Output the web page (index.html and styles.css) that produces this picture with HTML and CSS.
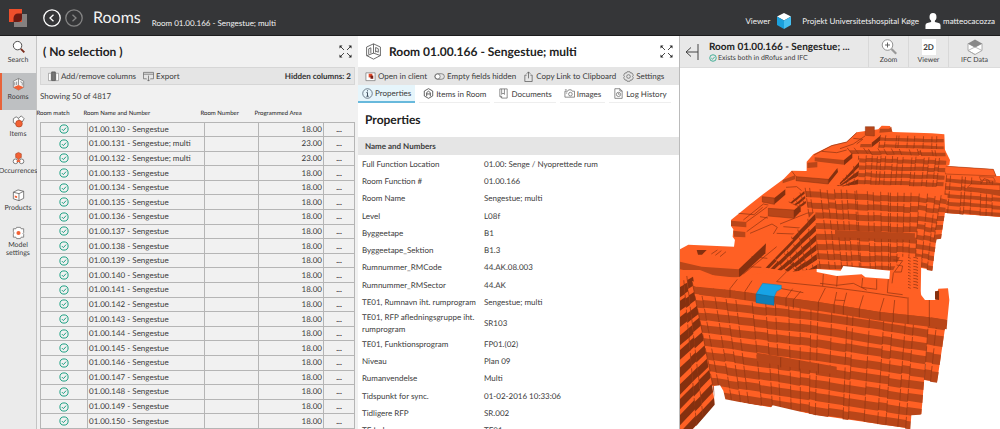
FILE: index.html
```html
<!DOCTYPE html>
<html lang="en">
<head>
    <meta charset="UTF-8">
    <meta name="viewport" content="width=device-width, initial-scale=1.0">
    <title>Rooms</title>
    <link rel="stylesheet" href="styles.css">
</head>
<body>
    <svg class="symbols" aria-hidden="true">
        <symbol id="check" viewBox="0 0 10 10">
            <circle cx="5" cy="5" r="4.1" fill="none" stroke="#1fa184" stroke-width="1"/>
            <path d="M2.9 5.1l1.5 1.5 2.7-3" fill="none" stroke="#1fa184" stroke-width="1"/>
        </symbol>
        <symbol id="expand" viewBox="0 0 13 13">
            <path d="M1 1l4 4M12 1L8 5M1 12l4-4M12 12L8 8" stroke="#333" stroke-width=".9"/>
            <path d="M.5.500h3L.5 3.500zM12.500.500v3l-3-3zM.5 12.500v-3l3 3zM12.500 12.500h-3l3-3z" fill="#222"/>
        </symbol>
    </svg>

    <header class="top-bar">
        <svg class="logo" viewBox="0 0 18 18">
            <rect x="5" y="5" width="13" height="13" fill="#858180"/>
            <path d="M0 0h13v13H0z" fill="#ee4f2b"/>
            <path d="M13 4.500v4.500q0 4-4.500 4H4.500V9q.5-4.500 4.500-4.500z" fill="#6b1a12"/>
        </svg>
        <div class="history">
            <button type="button" aria-label="Back">
                <svg viewBox="0 0 18 18"><circle cx="9" cy="9" r="8.200"/><path d="M10.500 5.800L7 9l3.500 3.200"/></svg>
            </button>
            <button type="button" class="disabled" aria-label="Forward">
                <svg viewBox="0 0 18 18"><circle cx="9" cy="9" r="8.200"/><path d="M7.500 5.800L11 9l-3.500 3.200"/></svg>
            </button>
        </div>
        <div class="title">
            <h1>Rooms</h1>
            <span>Room 01.00.166 - Sengestue; multi</span>
        </div>
        <div class="account">
            <a href="#">Viewer
                <svg class="cube" viewBox="0 0 14 16">
                    <path d="M7 0l7 3.500L7 7.500 0 3.500z" fill="#fff"/>
                    <path d="M0 3.500l7 4V16l-7-4z" fill="#1aa0dc"/>
                    <path d="M14 3.500l-7 4V16l7-4z" fill="#45bff0"/>
                </svg>
            </a>
            <span class="project">Projekt Universitetshospital Køge</span>
            <a href="#">
                <svg class="user" viewBox="0 0 16 17">
                    <ellipse cx="8" cy="4.200" rx="3.700" ry="4.200"/>
                    <path d="M6 7h4v2.500l4 1q2 .6 2 2.500v4H0v-4q0-1.900 2-2.500l4-1z"/>
                </svg>matteocacozza
            </a>
        </div>
    </header>

    <main class="workspace">
        <nav class="sidebar">
            <a href="#">
                <svg viewBox="0 0 16 16">
                    <circle cx="7" cy="6" r="4.500" fill="#fff" stroke="#444"/>
                    <path d="M10.500 9.500l3.700 3.700" stroke="#7a2b1a" stroke-width="2"/>
                </svg>
                Search
            </a>
            <a href="#" class="active">
                <svg viewBox="0 0 16 16">
                    <path d="M8 1.500l5.500 3v6.500L8 14 2.500 11V4.500z" fill="#f4f4f4" stroke="#777" stroke-width=".8"/>
                    <path d="M8 8.500l5.500 2.500L8 14l-5.500-3z" fill="#f26134"/>
                    <path d="M8 1.500v7M4 5.500v3.500M6 5v3.500M10 5l2 1v3" fill="none" stroke="#777" stroke-width=".8"/>
                </svg>
                Rooms
            </a>
            <a href="#">
                <svg viewBox="0 0 16 16">
                    <path d="M2.500 5l3-2 3 2v4l-3 2-3-2z" fill="#fff" stroke="#555" stroke-width=".8"/>
                    <path d="M8 4.500L11 2l3 3-2 3.500" fill="#fff" stroke="#555" stroke-width=".8"/>
                    <circle cx="8.500" cy="10.300" r="3.600" fill="#f26134" stroke="#a33a1a" stroke-width=".6"/>
                </svg>
                Items
            </a>
            <a href="#">
                <svg viewBox="0 0 16 16">
                    <path d="M5 3l3-1.500L11 3v4L8 8.500 5 7z" fill="#f26134" stroke="#a33a1a" stroke-width=".6"/>
                    <circle cx="4.800" cy="11" r="2.500" fill="#fff" stroke="#555" stroke-width=".8"/>
                    <circle cx="11.200" cy="11" r="2.500" fill="#fff" stroke="#555" stroke-width=".8"/>
                    <path d="M8 8v3M6 11h4" stroke="#f26134" stroke-width="1.500"/>
                </svg>
                Occurrences
            </a>
            <a href="#">
                <svg viewBox="0 0 16 16">
                    <path d="M2.500 4.500l5-2.500 6 1.500v7.500l-5 2.500-6-2z" fill="#fff" stroke="#555" stroke-width=".8"/>
                    <path d="M2.500 4.500l6 1.500 5-2.500M8.500 6v7.500" fill="none" stroke="#555" stroke-width=".8"/>
                    <path d="M4 8l2.500.7v2L4 10z" fill="#f26134"/>
                </svg>
                Products
            </a>
            <a href="#">
                <svg viewBox="0 0 16 16">
                    <path d="M6 2.500h4l.8 1.500h2.700V8l-.7 1 .7 1v3h-2.700L10 14.500H6L5.200 13H2.500v-3l.7-1.500-.7-1.500V4h2.700z" fill="#fff" stroke="#666" stroke-width=".8"/>
                    <circle cx="8" cy="8.500" r="2.200" fill="#f26134"/>
                </svg>
                Model settings
            </a>
        </nav>

        <section class="room-list">
            <div class="panel-head">
                <h2>( No selection )</h2>
                <button type="button" aria-label="Expand"><svg class="expand"><use href="#expand"/></svg></button>
            </div>
            <div class="toolbar">
                <button type="button">
                    <svg viewBox="0 0 12 12"><path d="M.5 2.500h3v8h-3zM8.500 2.500h3v8h-3z" fill="#fff" stroke="#888" stroke-width=".7"/><path d="M4 1h4v9.500H4z" fill="#777" stroke="#444" stroke-width=".7"/></svg>
                    Add/remove columns
                </button>
                <button type="button">
                    <svg viewBox="0 0 12 12"><path d="M4 8.500H.5v-7h11v7H8M.5 3.500h11M6 5v6M4.500 9.500L6 11l1.500-1.500" fill="none" stroke="#666" stroke-width=".8"/></svg>
                    Export
                </button>
                <strong>Hidden columns: 2</strong>
            </div>
            <p class="count">Showing 50 of 4817</p>
            <div class="table-wrap">
                <table>
                    <thead>
                        <tr>
                            <th class="match">Room match</th>
                            <th class="name">Room Name and Number</th>
                            <th class="number">Room Number</th>
                            <th class="area">Programmed Area</th>
                            <th class="more"></th>
                        </tr>
                    </thead>
                    <tbody id="roomRows"></tbody>
                </table>
            </div>
        </section>

        <section class="details">
            <div class="panel-head">
                <svg class="room-icon" viewBox="0 0 16 16">
                    <path d="M8 .8l6.500 3v8L8 15.200l-6.500-3.400v-8zM8 .8v9M1.500 12L8 9.500l6.500 2.300" fill="none" stroke="#555" stroke-width=".8"/>
                    <path d="M3.500 10.500V5.500l2-1v5.200M10 8.800V4.200l2.500 1.200v3.300L10 7.500" fill="none" stroke="#555" stroke-width=".8"/>
                </svg>
                <h2>Room 01.00.166 - Sengestue; multi</h2>
                <button type="button" aria-label="Expand"><svg class="expand"><use href="#expand"/></svg></button>
            </div>
            <div class="toolbar">
                <button type="button">
                    <svg viewBox="0 0 12 12"><path d="M1 2h10v8.500H1z" fill="#fff" stroke="#777" stroke-width=".8"/><path d="M4 3h4v4H4z" fill="#e0492a"/><path d="M6 5h3v3.500H6z" fill="#7a2016"/></svg>
                    Open in client
                </button>
                <button type="button">
                    <svg viewBox="0 0 12 12"><rect x=".8" y="3" width="10.500" height="6" rx="3" fill="none" stroke="#666" stroke-width=".8"/><circle cx="4" cy="6" r="2.700" fill="#fff" stroke="#666" stroke-width=".8"/></svg>
                    Empty fields hidden
                </button>
                <button type="button">
                    <svg viewBox="0 0 12 12"><path d="M4 4.500H2v7h8v-7H8M6 8V1M4 3l2-2 2 2" fill="none" stroke="#555" stroke-width=".8"/></svg>
                    Copy Link to Clipboard
                </button>
                <button type="button">
                    <svg viewBox="0 0 12 12"><path d="M4.500.8h3l.7 1.400 1.600-.1 1.500 2.500L10.400 6l.9 1.400-1.500 2.500-1.600-.1-.7 1.400h-3l-.7-1.400-1.600.1L.7 7.400 1.600 6 .7 4.600l1.500-2.500 1.600.1z" fill="none" stroke="#666" stroke-width=".8"/><circle cx="6" cy="6" r="2" fill="none" stroke="#666" stroke-width=".8"/></svg>
                    Settings
                </button>
            </div>
            <nav class="tabs">
                <a href="#" class="active">
                    <svg viewBox="0 0 12 12"><circle cx="6" cy="6" r="5.200" fill="none" stroke="#456" stroke-width=".8"/><path d="M6 5v4M4.800 5H6M4.800 9h2.500M6 2.500v1.200" fill="none" stroke="#345" stroke-width="1"/></svg>
                    Properties
                </a>
                <a href="#">
                    <svg viewBox="0 0 12 12"><path d="M6 .7l4.600 2.600v5.400L6 11.300 1.400 8.700V3.300z" fill="none" stroke="#444" stroke-width=".9"/><path d="M4 9V5l2-1.500L8 5v4M4 6.500h4" fill="none" stroke="#444" stroke-width=".9"/></svg>
                    Items in Room
                </a>
                <a href="#">
                    <svg viewBox="0 0 12 12"><path d="M2 1h8v10H4L2 9zM4 1v6l1.500-1.500L7 7V1M4 11V9H2" fill="none" stroke="#666" stroke-width=".8"/></svg>
                    Documents
                </a>
                <a href="#">
                    <svg viewBox="0 0 12 12"><path d="M1 3.500h3l1-1.500h3l1 1.500h2.500V10H1z" fill="none" stroke="#666" stroke-width=".8"/><circle cx="7" cy="6.700" r="2" fill="none" stroke="#666" stroke-width=".8"/><path d="M1 2h2M2 5.500h1.500" stroke="#666" stroke-width=".8"/></svg>
                    Images
                </a>
                <a href="#">
                    <svg viewBox="0 0 12 12"><path d="M2 .8h5.500L10 3.300v8H2zM7.500.8v2.500H10" fill="none" stroke="#666" stroke-width=".8"/><circle cx="6" cy="7" r="2.300" fill="none" stroke="#666" stroke-width=".8"/><path d="M6 5.500V7h1.200" fill="none" stroke="#666" stroke-width=".7"/></svg>
                    Log History
                </a>
            </nav>
            <h3>Properties</h3>
            <h4>Name and Numbers</h4>
            <div class="table-wrap">
                <table>
                    <tbody id="propertyRows"></tbody>
                </table>
            </div>
        </section>

        <section class="viewer">
            <div class="viewer-head">
                <button type="button" class="collapse" aria-label="Collapse">
                    <svg viewBox="0 0 14 16"><path d="M13 0v16M13 8H1M6 3.500L1 8l5 4.500" fill="none" stroke="#444" stroke-width="1"/></svg>
                </button>
                <div class="viewer-title">
                    <h2>Room 01.00.166 - Sengestue; ...</h2>
                    <p><svg class="check"><use href="#check"/></svg>Exists both in dRofus and IFC</p>
                </div>
                <button type="button" class="tool">
                    <svg viewBox="0 0 16 16"><circle cx="6.500" cy="6" r="5.300" fill="#fff" stroke="#888" stroke-width=".9"/><path d="M6.500 3.500v5M4 6h5" stroke="#555" stroke-width=".9"/><path d="M10.500 10l4.700 4.700" stroke="#999" stroke-width="2.200"/></svg>
                    Zoom
                </button>
                <button type="button" class="tool">
                    <b>2D</b>
                    Viewer
                </button>
                <button type="button" class="tool wide">
                    <svg viewBox="0 0 16 16"><path d="M1 4.500v7L8 15.500l7-4v-7L8 8z" fill="#fff" stroke="#999" stroke-width=".8"/><path d="M8 .5l7 4-7 4-7-4z" fill="#888"/><path d="M8 15.500l-7-4 7-3.500 7 3.500" fill="none" stroke="#aaa" stroke-width=".8"/></svg>
                    IFC Data
                </button>
            </div>
            <svg class="model" id="model" viewBox="0 -6 960 1083" preserveAspectRatio="xMinYMin slice"></svg>
        </section>
    </main>
    <script src="script.js"></script>
</body>
</html>
```
FILE: styles.css
```css
* {
    box-sizing: border-box;
}
body {
    font-family: Lato, sans-serif;
    font-size: 8px;
    text-rendering: geometricPrecision;
    margin: 0;
    height: 100vh;
    display: flex;
    flex-direction: column;
    overflow: hidden;
    color: #3c3c3c;
    background-color: #fff;
}
h1, h2, h3, h4, p {
    margin: 0;
}
a {
    color: inherit;
    text-decoration: none;
}
button {
    font: inherit;
    color: inherit;
    padding: 0;
    border: none;
    background: none;
    cursor: pointer;
    text-rendering: inherit;
}
svg {
    flex: none;
    display: block;
}
.symbols {
    display: none;
}

/* top bar */
.top-bar {
    flex: none;
    height: 36px;
    display: flex;
    align-items: center;
    padding: 0 5px 0 9px;
    background-color: #353638;
    border-bottom: 1px solid #1c1c1d;
    color: #f2f2f2;
}
.logo {
    width: 18px;
    height: 18px;
}
.history {
    display: flex;
    gap: 4px;
    margin-left: 16px;
}
.history svg {
    width: 18px;
    height: 18px;
    fill: none;
    stroke: #fff;
    stroke-width: 1.3;
}
.history .disabled svg {
    stroke: #858585;
}
.title {
    display: flex;
    align-items: flex-end;
    gap: 11px;
    margin-left: 10px;
}
.title h1 {
    font-size: 16px;
    line-height: 20px;
    font-weight: normal;
}
.account {
    display: flex;
    align-items: flex-end;
    gap: 6px;
    margin-left: auto;
    padding-top: 6px;
}
.account a {
    display: flex;
    align-items: center;
    gap: 7px;
}
.account a:last-child {
    gap: 2px;
}
.account .project {
    line-height: 16px;
    margin-left: 5px;
}
.cube {
    width: 14px;
    height: 16px;
}
.user {
    width: 16px;
    height: 16px;
    fill: #fff;
}

/* main layout */
.workspace {
    flex: 1;
    min-height: 0;
    display: grid;
    grid-template-columns: 37px 1fr 1fr 1fr;
    grid-template-rows: 100%;
}
.workspace > * {
    min-width: 0;
}
.sidebar {
    background-color: #ebebeb;
    border-right: 1px solid #c4c4c4;
    font-size: 7px;
    line-height: 8px;
}
.sidebar a {
    height: 37px;
    display: flex;
    flex-direction: column;
    align-items: center;
    padding-top: 4px;
    gap: 1px;
    text-align: center;
}
.sidebar a.active {
    background-color: #bec0c2;
    box-shadow: inset 2px 0 #e8633a;
}
.sidebar svg {
    width: 15px;
    height: 15px;
}
.room-list, .details, .viewer {
    display: flex;
    flex-direction: column;
}
.panel-head {
    height: 31px;
    display: flex;
    align-items: center;
    flex: none;
}
.panel-head h2 {
    font-size: 12px;
    color: #222;
}
.panel-head button {
    margin-left: auto;
}
.expand {
    width: 13px;
    height: 13px;
}
.toolbar {
    flex: none;
    height: 18px;
    display: flex;
    align-items: center;
    gap: 7px;
    background-color: #e5e5e5;
    white-space: nowrap;
}
.toolbar button, .tabs a {
    display: flex;
    align-items: center;
    gap: 2px;
}
.toolbar svg, .tabs svg {
    width: 11px;
    height: 11px;
}
.table-wrap {
    flex: 1;
    min-height: 0;
}
table {
    width: 100%;
    height: 100%;
    border-collapse: collapse;
    table-layout: fixed;
}

/* room list */
.room-list {
    background-color: #f1f1f1;
    padding: 0 3px;
}
.room-list .panel-head {
    padding: 0 3px;
}
.room-list .toolbar {
    border: 1px solid #d6d6d6;
    padding: 0 3px 0 7px;
}
.room-list .toolbar strong {
    margin-left: auto;
    color: #333;
}
.room-list .count {
    line-height: 23px;
    height: 20px;
}
.room-list th {
    height: 17px;
    padding: 0;
    font-size: 6px;
    font-weight: normal;
    color: #222;
    text-align: left;
    text-indent: -4px;
    white-space: nowrap;
}
.room-list td {
    padding: 0 1px;
    line-height: 11px;
    border: 1px solid #b5b5b5;
}
.room-list .match {
    width: 47px;
}
.room-list .number {
    width: 54px;
}
.room-list .area {
    width: 65px;
}
.room-list .more {
    width: 31px;
}
.room-list td.area {
    text-align: right;
}
.room-list td.more {
    text-align: center;
    font-weight: bold;
}
.check {
    width: 10px;
    height: 10px;
}
.room-list .check {
    margin: 0 auto;
}

/* room details */
.details {
    background-color: #fff;
}
.details .panel-head {
    padding: 0 6px 0 7px;
    gap: 7px;
}
.room-icon {
    width: 17px;
    height: 17px;
}
.details .toolbar {
    padding-left: 7px;
}
.tabs {
    flex: none;
    height: 18px;
    display: flex;
    gap: 4px;
}
.tabs a {
    padding: 0 4px;
    white-space: nowrap;
    border-bottom: 1px solid #eee;
}
.tabs a.active {
    background-color: #e6f5fb;
    border-bottom: 2px solid #68b9dc;
}
.details h3 {
    font-size: 12px;
    color: #222;
    line-height: 34px;
    padding-left: 7px;
}
.details h4 {
    font-size: 8px;
    line-height: 18px;
    padding-left: 7px;
    background-color: #e5e5e5;
}
/* last property runs under the bottom edge */
.details .table-wrap {
    margin-bottom: -10px;
}
.details tr {
    height: 17px;
}
.details th, .details td {
    padding: 0 0 0 4px;
    font-weight: normal;
    text-align: left;
    line-height: 12px;
}
.details th {
    width: 122px;
}

/* 3D viewer */
.viewer {
    border-left: 1px solid #bbb;
    background-color: #fff;
}
.viewer-head {
    flex: none;
    height: 32px;
    display: flex;
    align-items: center;
    background-color: #e8e8e8;
    border-bottom: 1px solid #dcdcdc;
}
.collapse {
    padding: 0 10px 0 5px;
}
.collapse svg {
    width: 14px;
    height: 16px;
}
.viewer-title {
    flex: 1;
    white-space: nowrap;
}
.viewer-title h2 {
    font-size: 10px;
    line-height: 13px;
    color: #222;
}
.viewer-title p {
    display: flex;
    align-items: center;
    font-size: 7px;
    line-height: 9px;
    gap: 1px;
}
.viewer-title .check {
    width: 8px;
    height: 8px;
}
.tool {
    width: 40px;
    height: 100%;
    display: flex;
    flex-direction: column;
    align-items: center;
    justify-content: center;
    gap: 1px;
    font-size: 7px;
    line-height: 9px;
    border-left: 1px solid #d8d8d8;
}
.tool.wide {
    width: 52px;
}
.tool svg {
    width: 16px;
    height: 16px;
}
.tool b {
    width: 14px;
    height: 16px;
    font-size: 8px;
    line-height: 16px;
    background-color: #fff;
}
.model {
    flex: 1;
    min-height: 0;
    width: 100%;
}
```
FILE: script.js
```js
const rooms = [];
for (let i = 130; i <= 150; i++) {
    const multi = i === 131 || i === 132;
    rooms.push({
        name: `01.00.${i} - Sengestue${multi ? '; multi' : ''}`,
        area: multi ? '23.00' : '18.00'
    });
}

const properties = [
    ['Full Function Location', '01.00: Senge / Nyoprettede rum'],
    ['Room Function #', '01.00.166'],
    ['Room Name', 'Sengestue; multi'],
    ['Level', 'L08f'],
    ['Byggeetape', 'B1'],
    ['Byggeetape_Sektion', 'B1.3'],
    ['Rumnummer_RMCode', '44.AK.08.003'],
    ['Rumnummer_RMSector', '44.AK'],
    ['TE01, Rumnavn iht. rumprogram', 'Sengestue; multi'],
    ['TE01, RFP afledningsgruppe iht. rumprogram', 'SR103'],
    ['TE01, Funktionsprogram', 'FP01.(02)'],
    ['Niveau', 'Plan 09'],
    ['Rumanvendelse', 'Multi'],
    ['Tidspunkt for sync.', '01-02-2016 10:33:06'],
    ['Tidligere RFP', 'SR.002'],
    ['TE Index', 'TE01']
];

document.getElementById('roomRows').innerHTML = rooms.map(room => `
    <tr>
        <td><svg class="check"><use href="#check"/></svg></td>
        <td>${room.name}</td>
        <td></td>
        <td class="area">${room.area}</td>
        <td class="more">...</td>
    </tr>`).join('');

document.getElementById('propertyRows').innerHTML = properties.map(([label, value]) => `
    <tr><th scope="row">${label}</th><td>${value}</td></tr>`).join('');

// building model
const ROOF = '#ff6024';
const WALL = '#b94619';
const SHADE = '#85300f';
const EDGE = '#8a3210';

const shapes = [];
let seed = 7;

function random() {
    seed = (seed * 16807) % 2147483647;
    return seed / 2147483647;
}

function poly(points, fill, stroke = 'none', width = 1.5) {
    const list = points.map(([x, y]) => `${Math.round(x)},${Math.round(y)}`).join(' ');
    shapes.push(`<polygon points="${list}" fill="${fill}" stroke="${stroke}" stroke-width="${width}"/>`);
}

function line(points, width = 2) {
    shapes.push(`<polyline points="${points.join(' ')}" fill="none" stroke="${EDGE}" stroke-width="${width}"/>`);
}

function mix(a, b, t) {
    return [a[0] + (b[0] - a[0]) * t, a[1] + (b[1] - a[1]) * t];
}

// corners run clockwise from the top left; every floor is a row of boxes with a light ledge
function facade([tl, tr, br, bl], floors, cols, wall = WALL, ledge = 0.42, jitter = 4) {
    poly([tl, tr, br, bl], ROOF);
    const splits = [0];
    for (let c = 1; c < cols; c++) {
        splits.push((c + (random() - 0.5) * 0.8) / cols);
    }
    splits.push(1);
    for (let f = 0; f < floors; f++) {
        for (let c = 0; c < cols; c++) {
            const top = (f + ledge) / floors;
            const bottom = (f + 1) / floors;
            const shift = (random() - 0.5) * jitter;
            const point = (u, v) => {
                const p = mix(mix(tl, tr, u), mix(bl, br, u), v);
                return [p[0], p[1] + shift];
            };
            const a = splits[c];
            const b = splits[c + 1];
            poly([point(a, top), point(b, top), point(b, bottom), point(a, bottom)], wall);
            line([point(a, (f + 0.1) / floors), point(a, bottom)]);
        }
    }
}

// far right wing
poly([[790, 288], [940, 298], [949, 318], [960, 318], [960, 441], [800, 428], [780, 400]], ROOF);
facade([[800, 312], [960, 328], [960, 440], [790, 428]], 5, 8, WALL, 0.5);
poly([[790, 288], [940, 298], [948, 318], [796, 312]], ROOF, EDGE);
poly([[874, 342], [960, 345], [960, 362], [862, 352]], ROOF, EDGE);
poly([[862, 352], [960, 362], [960, 378], [862, 360]], WALL);
poly([[898, 320], [940, 322], [946, 334], [902, 330]], ROOF, EDGE);
line([[905, 338], [912, 326], [926, 330], [930, 340]]);

// back block
poly([[380, 275], [400, 253], [455, 226], [500, 215], [530, 187], [595, 178], [605, 167], [630, 168], [638, 186],
    [755, 190], [793, 193], [795, 240], [810, 270], [808, 285], [792, 292], [790, 400], [380, 400], [380, 294]], ROOF);
facade([[602, 194], [791, 198], [791, 238], [596, 232]], 2, 9, WALL, 0.5, 3);
facade([[500, 232], [795, 238], [797, 258], [516, 252]], 1, 13, WALL, 0.45, 3);
facade([[536, 254], [800, 262], [790, 350], [532, 342]], 4, 15, WALL, 0.45, 3);
facade([[470, 346], [538, 266], [534, 342], [492, 348]], 3, 4, SHADE, 0.4, 3);
poly([[556, 170], [583, 170], [583, 198], [556, 196]], WALL, EDGE);
poly([[600, 176], [627, 176], [634, 170], [636, 185], [598, 188]], WALL);
poly([[382, 278], [412, 276], [412, 292], [382, 294]], WALL);
line([[530, 188], [500, 216], [455, 227], [402, 255]]);
line([[555, 198], [520, 222], [480, 236]]);
line([[520, 205], [548, 208], [530, 222]]);
line([[425, 244], [470, 248], [500, 240]]);
poly([[404, 262], [492, 270], [492, 284], [404, 274]], WALL);
poly([[492, 270], [517, 250], [517, 264], [492, 286]], SHADE);
poly([[575, 218], [600, 198], [600, 212], [575, 232]], SHADE);
poly([[542, 222], [575, 222], [575, 232], [540, 232]], WALL);

// left terraces
poly([[153, 450], [208, 405], [250, 372], [310, 328], [335, 302], [378, 303], [450, 288], [474, 292], [480, 345], [410, 350],
    [410, 440], [412, 620], [165, 620], [165, 510], [158, 500], [160, 478], [153, 468]], ROOF);
poly([[308, 330], [345, 316], [345, 328], [308, 340]], WALL);
poly([[348, 320], [445, 328], [445, 342], [348, 332]], WALL, EDGE);
poly([[445, 328], [472, 294], [474, 306], [445, 342]], SHADE);
poly([[247, 380], [283, 384], [283, 403], [247, 396]], WALL, EDGE);
poly([[283, 384], [316, 358], [316, 374], [283, 403]], SHADE);
poly([[153, 452], [199, 456], [199, 472], [153, 468]], WALL);
poly([[160, 482], [196, 486], [196, 502], [162, 500]], WALL);
poly([[166, 512], [190, 516], [190, 540], [170, 534]], WALL);
poly([[265, 415], [342, 420], [342, 445], [265, 438]], WALL, EDGE);
poly([[342, 420], [362, 404], [362, 424], [342, 445]], SHADE);
line([[190, 450], [250, 402], [265, 405]]);
line([[176, 430], [222, 434], [248, 412]]);
line([[240, 440], [264, 444]]);
line([[199, 456], [262, 410]]);
line([[200, 485], [262, 440]]);
line([[210, 490], [276, 462], [292, 472], [280, 492]]);
line([[318, 352], [350, 350], [365, 362]]);
line([[335, 303], [345, 316], [348, 320]]);
line([[300, 462], [380, 430], [404, 424]]);
line([[290, 490], [345, 492]]);
line([[310, 470], [362, 474]]);
facade([[325, 396], [372, 356], [378, 400], [360, 412]], 3, 3, SHADE, 0.5, 2);

// middle wing
facade([[375, 352], [720, 368], [708, 610], [410, 600]], 8, 17, WALL, 0.42, 4);
facade([[718, 366], [786, 376], [757, 600], [705, 590]], 8, 3, WALL, 0.5, 6);
facade([[784, 372], [803, 376], [783, 505], [762, 508]], 5, 1, WALL, 0.45, 2);
poly([[465, 480], [705, 490], [704, 510], [465, 502]], WALL);

// courtyard side of the left block
facade([[250, 590], [406, 422], [412, 600], [330, 640]], 6, 7, SHADE, 0.4, 6);

// courtyard floor and the opening
poly([[180, 625], [250, 592], [330, 606], [410, 596], [640, 600], [660, 560], [724, 560], [722, 680], [300, 640]], ROOF);
poly([[410, 597], [482, 602], [490, 588], [630, 602], [628, 627], [556, 622], [545, 613], [470, 618], [410, 606]], '#fff');
line([[640, 570], [668, 572], [640, 610], [636, 640]]);
line([[650, 585], [668, 588], [664, 606], [645, 606]]);
for (let y = 562; y < 660; y += 9) {
    line([[684, y], [692, y + 3]]);
    line([[700, y], [712, y + 2], [712, y + 5]]);
}

// left roof
poly([[0, 538], [25, 524], [162, 530], [165, 508], [260, 508], [340, 508], [240, 610], [170, 630], [45, 650], [0, 660]], ROOF);
poly([[0, 575], [65, 590], [176, 598], [176, 624], [65, 612], [0, 598]], WALL);
poly([[176, 598], [258, 520], [256, 550], [176, 624]], SHADE);
poly([[50, 540], [80, 540], [66, 554], [54, 554]], SHADE);
line([[94, 552], [112, 540]]);
line([[106, 556], [124, 542]]);
line([[120, 560], [138, 545]]);
line([[190, 612], [290, 530]]);
line([[215, 560], [262, 565]]);
line([[200, 590], [244, 592]]);

// near left facade
poly([[0, 600], [60, 600], [160, 640], [160, 940], [90, 950], [0, 950]], ROOF);
facade([[-20, 640], [36, 610], [106, 1004], [-20, 1140]], 10, 4, SHADE, 0.38, 10);

// front facade
facade([[36, 634], [420, 672], [408, 1034], [106, 984]], 9, 11, WALL, 0.4, 5);
facade([[415, 672], [750, 724], [720, 1080], [406, 1034]], 9, 9, WALL, 0.4, 5);
facade([[748, 720], [802, 728], [771, 936], [733, 930]], 4, 2, WALL, 0.4, 4);
poly([[230, 848], [470, 890], [470, 914], [230, 874]], WALL);
[302, 358, 415].forEach(x => line([[x, 850 + (x - 230) / 6], [x, 880 + (x - 230) / 6]]));
poly([[102, 948], [120, 946], [130, 962], [136, 988], [228, 1006], [272, 1014], [278, 1006], [400, 1034], [400, 1090], [30, 1090], [104, 1004]], '#fff');
poly([[720, 1034], [820, 1000], [820, 1090], [690, 1090], [694, 1036]], '#fff');

// front roof
poly([[45, 650], [72, 624], [170, 622], [250, 608], [420, 624], [636, 650], [720, 662], [724, 676], [735, 690], [766, 690],
    [775, 656], [804, 655], [808, 690], [802, 750], [748, 742], [600, 726], [415, 696], [150, 660]], ROOF);
poly([[765, 664], [777, 662], [777, 690], [765, 688]], SHADE);
poly([[50, 650], [150, 660], [150, 684], [58, 674]], WALL);
poly([[150, 660], [230, 672], [230, 696], [150, 684]], WALL);
poly([[283, 678], [415, 696], [415, 724], [283, 702]], WALL);
poly([[415, 696], [600, 726], [600, 752], [415, 722]], WALL);
poly([[600, 726], [748, 742], [748, 770], [600, 752]], WALL);
poly([[752, 742], [802, 750], [800, 778], [752, 770]], WALL);
[[150, 656, 172, 628], [195, 664, 216, 632], [318, 684, 338, 656], [340, 690, 362, 664], [415, 696, 436, 654], [462, 704, 470, 666],
    [490, 708, 500, 668], [538, 716, 550, 676], [600, 724, 612, 684], [640, 730, 644, 690], [684, 736, 684, 682], [748, 742, 748, 690]]
    .forEach(([x1, y1, x2, y2]) => line([[x1, y1 + 26], [x1, y1], [x2, y2]]));
line([[300, 655], [370, 668]]);
line([[465, 690], [495, 692]]);
line([[320, 605], [290, 635]]);
line([[290, 635], [420, 648], [545, 664], [682, 684]]);
line([[430, 612], [428, 648]]);
line([[472, 618], [470, 650]]);
line([[548, 624], [545, 652], [590, 658], [590, 628]]);
line([[625, 628], [622, 668], [668, 674]]);
line([[420, 640], [470, 646], [520, 640], [560, 660]]);

// selected room
poly([[228, 672], [248, 640], [304, 646], [304, 656], [290, 664], [282, 682]], '#17a3e6', '#1180b5');
poly([[228, 672], [282, 680], [282, 706], [228, 698]], '#0f7fb8', '#0c6a9b');

document.getElementById('model').innerHTML = shapes.join('');
```
